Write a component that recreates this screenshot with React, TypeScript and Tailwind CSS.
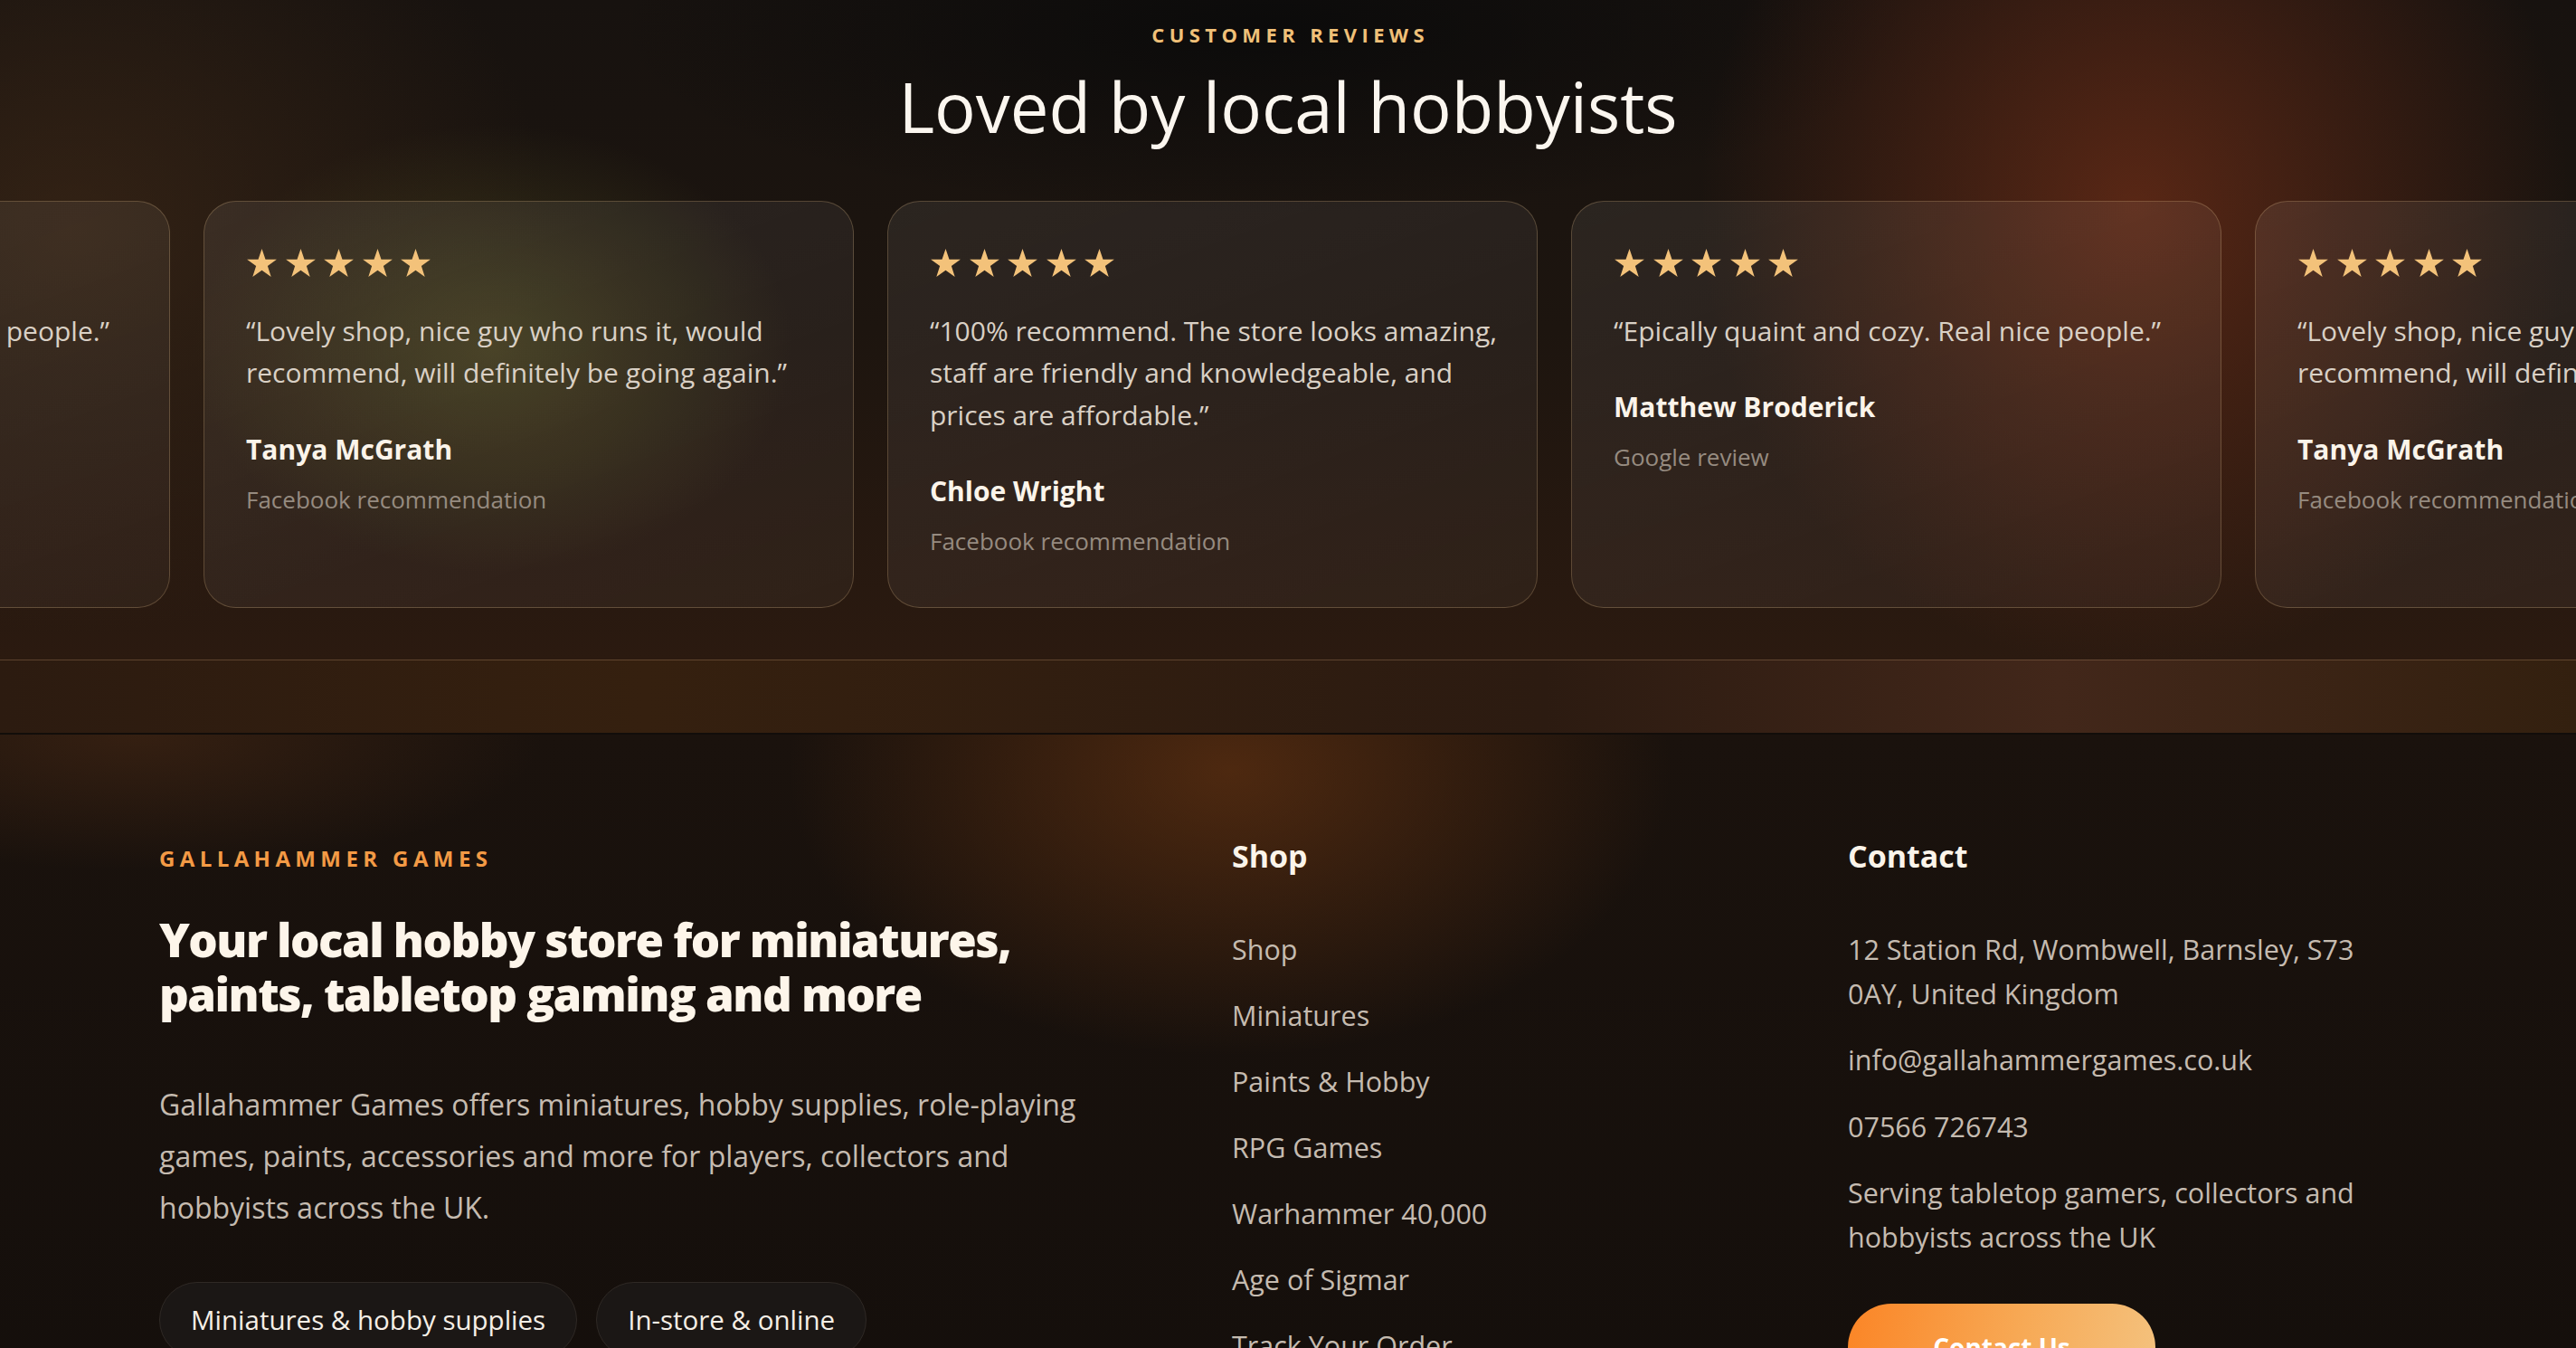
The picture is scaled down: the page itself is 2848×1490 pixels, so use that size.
import React from "react";

const REVIEWS = [
  {
    quote: "“Epically quaint and cozy. Real nice people.”",
    name: "Matthew Broderick",
    source: "Google review",
  },
  {
    quote: "“Lovely shop, nice guy who runs it, would recommend, will definitely be going again.”",
    name: "Tanya McGrath",
    source: "Facebook recommendation",
  },
  {
    quote: "“100% recommend. The store looks amazing, staff are friendly and knowledgeable, and prices are affordable.”",
    name: "Chloe Wright",
    source: "Facebook recommendation",
  },
  {
    quote: "“Epically quaint and cozy. Real nice people.”",
    name: "Matthew Broderick",
    source: "Google review",
  },
  {
    quote: "“Lovely shop, nice guy who runs it, would recommend, will definitely be going again.”",
    name: "Tanya McGrath",
    source: "Facebook recommendation",
  },
];

const SHOP_LINKS = [
  "Shop",
  "Miniatures",
  "Paints & Hobby",
  "RPG Games",
  "Warhammer 40,000",
  "Age of Sigmar",
  "Track Your Order",
  "Gift Cards",
];

function Star() {
  return (
    <svg width="35" height="34" viewBox="0 0 24 23" aria-hidden="true">
      <path
        d="M12 0.6l2.75 8.05h8.5l-6.88 4.98 2.63 8.1L12 16.75l-7 4.98 2.63-8.1L0.75 8.65h8.5z"
        fill="#f3c27a"
      />
    </svg>
  );
}

function ReviewCard({ quote, name, source }: { quote: string; name: string; source: string }) {
  return (
    <div className="w-[719px] h-[450px] shrink-0 rounded-[36px] border border-[rgba(214,178,128,0.28)] bg-[linear-gradient(160deg,rgba(255,255,255,0.075),rgba(255,255,255,0.035))] pl-[46px] pr-[34px] pt-[51px]">
      <div className="flex gap-[7.5px]">
        {[0, 1, 2, 3, 4].map((i) => (
          <Star key={i} />
        ))}
      </div>
      <p className="mt-[35px] text-[30px] leading-[46.5px] text-[#d9d0c5]">{quote}</p>
      <p className="mt-[41px] text-[30px] leading-[39px] font-bold text-[#fbf4ea]">{name}</p>
      <p className="mt-[17px] text-[26px] leading-[39px] text-[#968b80]">{source}</p>
    </div>
  );
}

function Reviews() {
  return (
    <section className="h-[729px] overflow-hidden bg-[radial-gradient(ellipse_640px_680px_at_2360px_230px,rgba(118,48,24,0.68),transparent_75%),radial-gradient(ellipse_440px_330px_at_545px_385px,rgba(88,84,36,0.55),transparent_75%),radial-gradient(ellipse_700px_600px_at_80px_250px,rgba(70,45,25,0.55),transparent_75%),radial-gradient(ellipse_900px_260px_at_1400px_30px,rgba(10,10,10,0.9),transparent_80%),linear-gradient(to_bottom,#17120f_0%,#1d150f_50%,#2b1a10_100%)]">
      <div className="flex flex-col items-center pt-[22px]">
        <p className="pl-[0.245em] text-[22px] leading-[33px] font-bold tracking-[0.245em] uppercase text-[#f0c078]">
          Customer Reviews
        </p>
        <h2 className="mt-[21px] text-[76px] leading-[84.7px] font-normal text-[#fbf6ef]">
          Loved by local hobbyists
        </h2>
      </div>
      <div className="mt-[61px] ml-[-531px] flex gap-[37px]">
        {REVIEWS.map((r, i) => (
          <ReviewCard key={i} {...r} />
        ))}
      </div>
    </section>
  );
}

function Footer() {
  return (
    <footer className="border-t-2 border-[#120d0a] bg-[radial-gradient(ellipse_650px_420px_at_1360px_40px,rgba(112,56,18,0.6),transparent_75%),radial-gradient(ellipse_600px_200px_at_150px_0px,rgba(80,45,22,0.5),transparent_75%),linear-gradient(to_bottom,#1a120d,#130e0b)] px-[176px] pt-[119px] pb-[160px]">
      <div className="grid grid-cols-[1134px_629px_600px] gap-x-[52px]">
        <div className="max-w-[1040px]">
          <p className="text-[24px] leading-[36px] font-bold tracking-[0.225em] uppercase text-[#f39a45]">
            Gallahammer Games
          </p>
          <h3 className="mt-[41px] text-[51px] leading-[60px] font-extrabold tracking-[-0.03em] text-[#fdf5ea]">
            Your local hobby store for miniatures, paints, tabletop gaming and more
          </h3>
          <p className="mt-[64px] text-[32px] leading-[57px] text-[#c5bbb0]">
            Gallahammer Games offers miniatures, hobby supplies, role-playing games, paints, accessories and
            more for players, collectors and hobbyists across the UK.
          </p>
          <div className="mt-[54px] flex gap-[21px]">
            <span className="rounded-full border border-[#2f2925] bg-[#1b1715] px-[34px] py-[20px] text-[29.5px] leading-[42px] font-medium text-[#f6efe6]">
              Miniatures &amp; hobby supplies
            </span>
            <span className="rounded-full border border-[#2f2925] bg-[#1b1715] px-[34px] py-[20px] text-[29.5px] leading-[42px] font-medium text-[#f6efe6]">
              In-store &amp; online
            </span>
          </div>
        </div>

        <div>
          <h4 className="-mt-[2px] text-[34px] leading-none font-bold text-[#fbf4ea]">Shop</h4>
          <ul className="mt-[62px] flex flex-col gap-[25px]">
            {SHOP_LINKS.map((l) => (
              <li key={l} className="text-[30.5px] leading-[48px] text-[#c5bbb0]">
                {l}
              </li>
            ))}
          </ul>
        </div>

        <div>
          <h4 className="-mt-[2px] text-[34px] leading-none font-bold text-[#fbf4ea]">Contact</h4>
          <ul className="mt-[62px] flex flex-col gap-[25px] text-[30.5px] leading-[48.5px] text-[#c5bbb0]">
            <li>12 Station Rd, Wombwell, Barnsley, S73 0AY, United Kingdom</li>
            <li>info@gallahammergames.co.uk</li>
            <li>07566 726743</li>
            <li>Serving tabletop gamers, collectors and hobbyists across the UK</li>
          </ul>
          <button className="mt-[50px] flex h-[96px] w-[340px] items-center justify-center rounded-full bg-[linear-gradient(100deg,#fb8526_0%,#f7a955_55%,#f4c27e_100%)] text-[28px] font-bold text-white">
            Contact Us
          </button>
        </div>
      </div>
    </footer>
  );
}

export default function App() {
  return (
    <div className="min-h-screen bg-[#130e0b] font-['Open_Sans',sans-serif] overflow-hidden">
      <Reviews />
      <div className="h-[81px] border-t border-[rgba(150,115,85,0.45)] bg-[linear-gradient(90deg,#2c1b10_0%,#35200f_25%,#2c1b11_60%,#42271a_80%,#33200f_100%)]" />
      <Footer />
    </div>
  );
}
